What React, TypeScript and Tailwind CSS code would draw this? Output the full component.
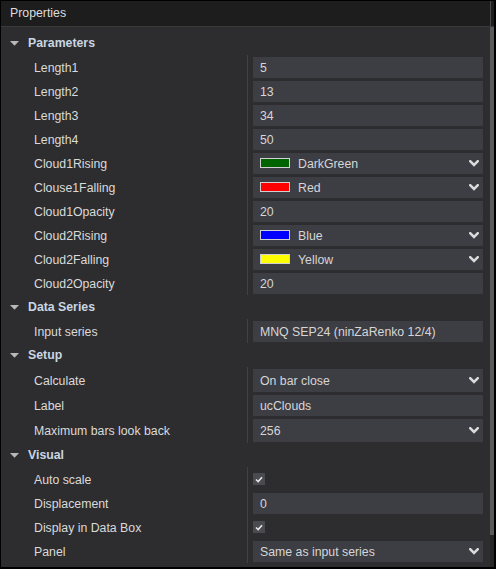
import React from "react";

type Row =
  | { label: string; kind: "text"; value: string; tall?: boolean }
  | { label: string; kind: "color"; value: string; color: string }
  | { label: string; kind: "combo"; value: string; tall?: boolean }
  | { label: string; kind: "check" };

const sections: { title: string; rows: Row[] }[] = [
  {
    title: "Parameters",
    rows: [
      { label: "Length1", kind: "text", value: "5" },
      { label: "Length2", kind: "text", value: "13" },
      { label: "Length3", kind: "text", value: "34" },
      { label: "Length4", kind: "text", value: "50" },
      { label: "Cloud1Rising", kind: "color", value: "DarkGreen", color: "#006400" },
      { label: "Clouse1Falling", kind: "color", value: "Red", color: "#ff0000" },
      { label: "Cloud1Opacity", kind: "text", value: "20" },
      { label: "Cloud2Rising", kind: "color", value: "Blue", color: "#0000ff" },
      { label: "Cloud2Falling", kind: "color", value: "Yellow", color: "#ffff00" },
      { label: "Cloud2Opacity", kind: "text", value: "20" },
    ],
  },
  {
    title: "Data Series",
    rows: [{ label: "Input series", kind: "text", value: "MNQ SEP24 (ninZaRenko 12/4)" }],
  },
  {
    title: "Setup",
    rows: [
      { label: "Calculate", kind: "combo", value: "On bar close", tall: true },
      { label: "Label", kind: "text", value: "ucClouds" },
      { label: "Maximum bars look back", kind: "combo", value: "256", tall: true },
    ],
  },
  {
    title: "Visual",
    rows: [
      { label: "Auto scale", kind: "check" },
      { label: "Displacement", kind: "text", value: "0" },
      { label: "Display in Data Box", kind: "check" },
      { label: "Panel", kind: "combo", value: "Same as input series" },
    ],
  },
];

function Chevron() {
  return (
    <svg width="10" height="7" viewBox="0 0 10 7" className="shrink-0">
      <path d="M1.2 1.2 L5 5 L8.8 1.2" fill="none" stroke="#dadada" strokeWidth="2.5" strokeLinecap="square" />
    </svg>
  );
}

function Triangle() {
  return (
    <svg width="9" height="5" viewBox="0 0 9 5" className="shrink-0">
      <polygon points="0,0 9,0 4.5,4.8" fill="#b8b8b8" />
    </svg>
  );
}

function Value({ row }: { row: Row }) {
  if (row.kind === "check") {
    return (
      <div className="w-[12px] h-[12px] bg-[#4a4a51] flex items-center justify-center">
        <svg width="8" height="7" viewBox="0 0 8 7">
          <path d="M1 3.5 L3.2 5.5 L7 1.3" fill="none" stroke="#e8e8e8" strokeWidth="1.6" />
        </svg>
      </div>
    );
  }
  const tall = (row.kind === "combo" || row.kind === "text") && row.tall;
  return (
    <div
      className={
        "w-[230px] bg-[#3d3d44] flex items-center pl-[7px] pr-[4px] " +
        (tall ? "h-[23px]" : "h-[21px]")
      }
    >
      {row.kind === "color" && (
        <div
          className="w-[30px] h-[10px] border border-[#d0d0d0] mr-[8px] shrink-0"
          style={{ backgroundColor: row.color }}
        />
      )}
      <span className="flex-1 text-[#d6d6d6] whitespace-nowrap pt-[2px]">{row.value}</span>
      {(row.kind === "color" || row.kind === "combo") && <Chevron />}
    </div>
  );
}

export default function App() {
  return (
    <div
      className="w-[496px] h-[569px] bg-black pt-[1px] pl-[1px] pr-[2px] pb-[2px] flex flex-col text-[12.3px]"
      style={{ fontFamily: '"Liberation Sans", Arial, sans-serif' }}
    >
      <div className="h-[26px] shrink-0 bg-[#1d1d1d] border-b border-[#3a3a3a] flex">
        <div className="flex-1 flex items-center pl-[9px] text-[#dedede] pb-[1px]">Properties</div>
        <div className="w-[1px] bg-[#4a4a4a]" />
        <div className="w-[3px]" />
      </div>
      <div className="flex-1 flex min-h-0">
        <div className="flex-1 bg-[#2d2d2f] pt-[4px] flex flex-col">
          {sections.map((s) => (
            <div key={s.title} className="flex flex-col">
              <div className="h-[24px] flex items-center pl-[9px]">
                <Triangle />
                <span className="ml-[9px] font-bold text-[#c9d6e3] pt-[1px]">{s.title}</span>
              </div>
              {s.rows.map((r) => {
                const tall = (r.kind === "combo" || r.kind === "text") && r.tall;
                return (
                  <div key={r.label} className={"flex " + (tall ? "h-[26px]" : "h-[24px]")}>
                    <div className="w-[246px] pl-[33px] pt-[2px] flex items-center text-[#dadada] whitespace-nowrap">
                      {r.label}
                    </div>
                    <div className="border-l border-[#414141] pl-[5px] flex items-center">
                      <Value row={r} />
                    </div>
                  </div>
                );
              })}
            </div>
          ))}
        </div>
        <div className="w-[4px] flex flex-col bg-[#262626]">
          <div className="h-[508px] bg-[#5a5a5a]" />
        </div>
      </div>
    </div>
  );
}
